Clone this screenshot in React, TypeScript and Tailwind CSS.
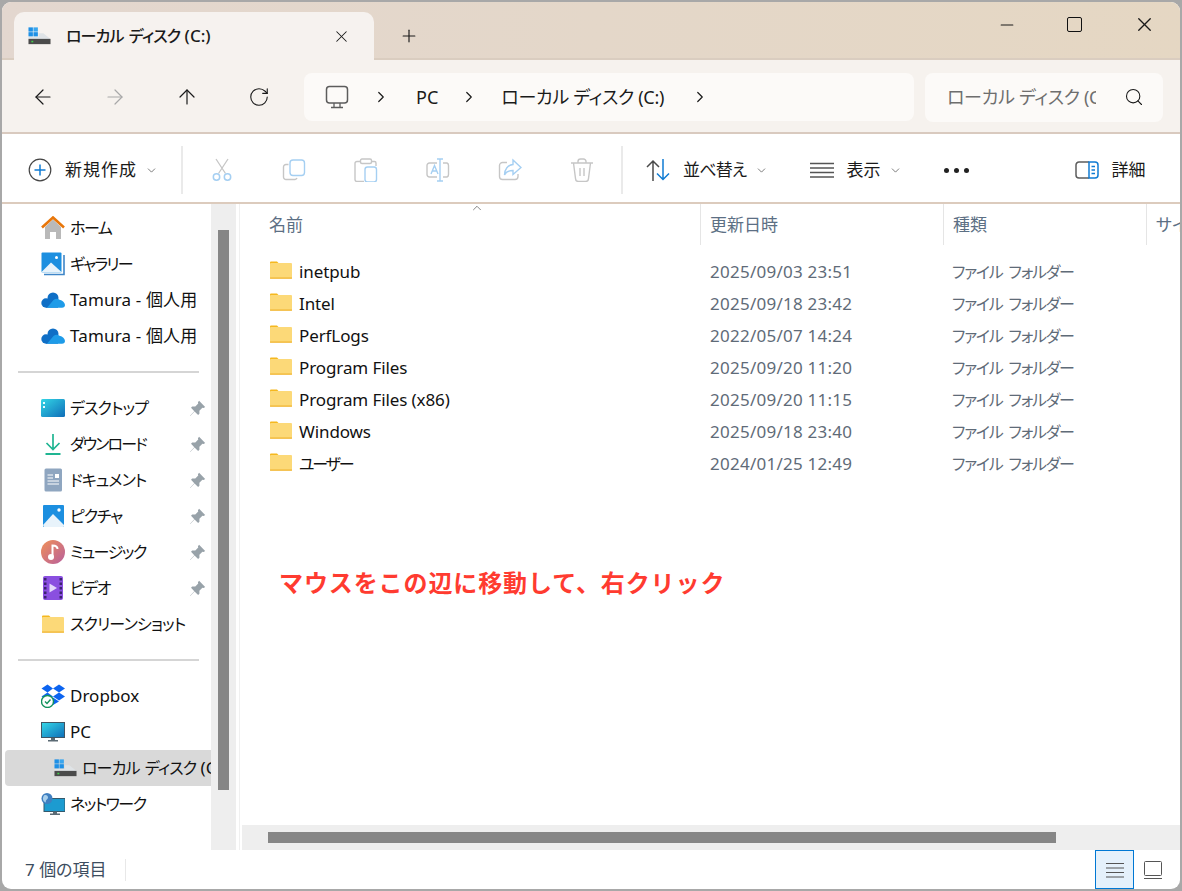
import { ChevronDown, ChevronRight, ChevronUp, X, Plus, Minus, RotateCw, ArrowLeft, ArrowRight, ArrowUp, Search } from "lucide-react";
import type { ReactNode } from "react";

const files = [
	{ name: "inetpub", date: "2025/09/03 23:51" },
	{ name: "Intel", date: "2025/09/18 23:42" },
	{ name: "PerfLogs", date: "2022/05/07 14:24" },
	{ name: "Program Files", date: "2025/09/20 11:20" },
	{ name: "Program Files (x86)", date: "2025/09/20 11:15" },
	{ name: "Windows", date: "2025/09/18 23:40" },
	{ name: "ユーザー", date: "2024/01/25 12:49", narrow: true },
];

const FolderIcon = ({ className = "w-[24px] h-[24px]" }: { className?: string }) => (
	<svg viewBox="0 0 24 24" className={className}>
		<path d="M1 4.500a1 1 0 0 1 1-1h6l2.500 2.500H1z" fill="#f5b81f" />
		<rect x="1" y="5" width="22" height="15.500" rx="1" fill="#fcd978" />
		<rect x="1" y="19.500" width="22" height="1.200" fill="#efb32c" />
	</svg>
);

const DriveIcon = () => (
	<svg viewBox="0 0 24 18" className="w-[23px] h-[18px] shrink-0">
		<rect x="0.500" y="0" width="4.600" height="4.400" fill="#1e90e6" />
		<rect x="5.700" y="0" width="4.600" height="4.400" fill="#3aa6ee" />
		<rect x="0.500" y="5" width="4.600" height="4.400" fill="#1e90e6" />
		<rect x="5.700" y="5" width="4.600" height="4.400" fill="#1e90e6" />
		<path d="M11 6h5l7.500 6H0.500V10H11z" fill="#dfe3e6" />
		<rect x="0.500" y="12" width="23" height="5.500" fill="#4b4b4b" />
		<rect x="3.500" y="14" width="2" height="1.600" fill="#3fd14a" />
	</svg>
);

const PinIcon = () => (
	<svg viewBox="0 0 16 16" className="w-[17px] h-[17px] shrink-0">
		<path d="M9.500 0.800 15.200 6.500 13.800 7.600 12.600 7.300 9.800 10.100 9.800 13 8.600 14.100 5.200 10.800 1.200 15 1 14.800 5 10.600 1.900 7.400 3 6.200 5.900 6.200 8.700 3.400 8.400 2.200z" fill="#98a2a9" />
	</svg>
);

const HomeIcon = () => (
	<svg viewBox="0 0 24 24" className="w-[24px] h-[24px]">
		<path d="M4 11 12 3.500 20 11V23H15V16H9V23H4z" fill="#b9b9b9" />
		<path d="M1 11.500 12 1.500 23 11.500" fill="none" stroke="#e8760a" strokeWidth="2.600" />
	</svg>
);

const GalleryIcon = () => (
	<svg viewBox="0 0 24 24" className="w-[24px] h-[24px]">
		<path d="M3 22.500H23V3" fill="none" stroke="#3f86c8" strokeWidth="1.600" />
		<rect x="0.500" y="0.500" width="20" height="20" rx="1" fill="#1c8fe0" />
		<path d="M0.500 20 10 10.500 20.500 20v0.500H0.500z" fill="#e8f3fb" />
		<circle cx="15.500" cy="5.500" r="1.500" fill="#fff" />
	</svg>
);

const CloudIcon = () => (
	<svg viewBox="0 0 24 16" className="w-[24px] h-[16px]">
		<g fill="#0f6fc6">
			<circle cx="12" cy="6" r="5.500" />
			<circle cx="5" cy="11" r="4.700" />
			<rect x="5" y="8" width="12" height="7.700" />
		</g>
		<path d="M6 15.700 12.500 8Q15.500 5.800 18.500 7.800Q23.500 9 24 13Q23.800 15.700 21 15.700z" fill="#1e9be8" />
	</svg>
);

const DesktopIcon = () => (
	<svg viewBox="0 0 24 18" className="w-[24px] h-[18px]">
		<defs>
			<linearGradient id="desk" x1="0" y1="0" x2="1" y2="1">
				<stop offset="0" stopColor="#33d6e6" />
				<stop offset="1" stopColor="#0f6db8" />
			</linearGradient>
		</defs>
		<rect width="24" height="18" rx="1.500" fill="url(#desk)" />
		<rect x="2" y="3" width="2" height="2" fill="#e8fbff" />
		<rect x="2" y="7" width="2" height="2" fill="#e8fbff" />
	</svg>
);

const DownloadIcon = () => (
	<svg viewBox="0 0 24 24" className="w-[24px] h-[24px]" fill="none" stroke="#1fb592" strokeWidth="1.700">
		<path d="M12 2V17M5.500 11 12 17.500 18.500 11" />
		<path d="M4.500 22H19.500" strokeWidth="2" />
	</svg>
);

const DocIcon = () => (
	<svg viewBox="0 0 24 24" className="w-[24px] h-[24px]">
		<rect x="3.500" y="0.500" width="17.500" height="23" rx="1.500" fill="#8fa6c0" />
		<path d="M6.500 7H12M6.500 10H12M6.500 13H18M6.500 16H18" stroke="#fff" strokeWidth="1" />
		<rect x="14" y="6" width="4" height="4" fill="#fff" />
	</svg>
);

const PictureIcon = () => (
	<svg viewBox="0 0 24 24" className="w-[24px] h-[24px]">
		<rect x="2" y="1" width="21" height="22" rx="1" fill="#1c8fe0" />
		<path d="M2 21 12 10 23 21v1a1 1 0 0 1-1 1H3z" fill="#e8f3fb" />
		<circle cx="18" cy="6" r="1.700" fill="#fff" />
	</svg>
);

const MusicIcon = () => (
	<svg viewBox="0 0 24 24" className="w-[24px] h-[24px]">
		<defs>
			<linearGradient id="mus" x1="0" y1="0" x2="1" y2="1">
				<stop offset="0" stopColor="#f09058" />
				<stop offset="1" stopColor="#b85f9c" />
			</linearGradient>
		</defs>
		<circle cx="12" cy="12" r="12" fill="url(#mus)" />
		<circle cx="10" cy="17" r="3" fill="#fff" />
		<path d="M11.500 17V5.500c2.500 0 5 1 5 3.500" fill="none" stroke="#fff" strokeWidth="2" />
	</svg>
);

const VideoIcon = () => (
	<svg viewBox="0 0 24 24" className="w-[24px] h-[24px]">
		<rect x="2" y="0" width="20" height="24" rx="2" fill="#8a4fe0" />
		{[2, 6.500, 11, 15.500, 20].map((y) => (
			<g key={y}>
				<rect x="3" y={y} width="2.500" height="2.500" fill="#3c2470" />
				<rect x="18.500" y={y} width="2.500" height="2.500" fill="#3c2470" />
			</g>
		))}
		<path d="M8.500 7.500 16 12 8.500 16.500z" fill="#e4d8fb" />
	</svg>
);

const DropboxIcon = () => (
	<svg viewBox="0 0 24 24" className="w-[24px] h-[24px]">
		<path d="M6.500 0.500 0.500 4.500 6.500 8.500 12 4.500zM18 0.500 12 4.500 18 8.500 24 4.500zM0.500 12.500 6.500 8.500 12 12.500 6.500 16.500zM24 12.500 18 8.500 12 12.500 18 16.500zM6.500 17.500 12 13.500 18 17.500 12 21z" fill="#0c64f0" />
		<circle cx="6.500" cy="17.500" r="6" fill="#fff" stroke="#12925c" strokeWidth="1.400" />
		<path d="M4 17.500 6 19.500 9.500 15.500" fill="none" stroke="#12925c" strokeWidth="1.400" />
	</svg>
);

const PcIcon = () => (
	<svg viewBox="0 0 24 20" className="w-[24px] h-[20px]">
		<defs>
			<linearGradient id="pcs" x1="0" y1="0" x2="1" y2="1">
				<stop offset="0" stopColor="#35d8e8" />
				<stop offset="1" stopColor="#0f6db8" />
			</linearGradient>
		</defs>
		<rect x="0.500" y="0.500" width="23" height="15" fill="url(#pcs)" stroke="#3f5564" strokeWidth="1" />
		<path d="M10 16h4v2h3v1.500H7V18h3z" fill="#5b6a74" />
	</svg>
);

const NetworkIcon = () => (
	<svg viewBox="0 0 24 24" className="w-[25px] h-[25px]">
		<rect x="3" y="6" width="21" height="13" fill="#1c9bd0" stroke="#35596b" strokeWidth="1" />
		<path d="M12 19h4v2h3v1.500H9V21h3z" fill="#5b6a74" />
		<circle cx="6" cy="6" r="5.500" fill="#3f7fc0" />
		<path d="M3 3c2-1 4 0 4 2S4 7 5 10c-3-1-4-4-2-7z" fill="#a9d0ec" />
	</svg>
);

const CutIcon = () => (
	<svg viewBox="0 0 24 24" className="w-[24px] h-[24px]" fill="none" strokeWidth="1.300">
		<path d="M6 1 15.500 15.500M18 1 8.500 15.500" stroke="#c6c6c6" />
		<circle cx="6.500" cy="19" r="3.200" stroke="#a5cff2" strokeWidth="1.500" />
		<circle cx="17.500" cy="19" r="3.200" stroke="#a5cff2" strokeWidth="1.500" />
	</svg>
);

const CopyIcon = () => (
	<svg viewBox="0 0 24 24" className="w-[24px] h-[24px]" fill="none" strokeWidth="1.400">
		<path d="M6.500 6.500H4a2.500 2.500 0 0 0-2.500 2.500v10A2.500 2.500 0 0 0 4 21.500h9a2.500 2.500 0 0 0 2-1.500" stroke="#c6c6c6" />
		<rect x="8" y="2" width="14.500" height="15.500" rx="3" stroke="#a5cff2" />
	</svg>
);

const PasteIcon = () => (
	<svg viewBox="0 0 24 24" className="w-[24px] h-[24px]" fill="none" strokeWidth="1.400">
		<path d="M6 3.500H3a2 2 0 0 0-2 2v16a2 2 0 0 0 2 2h7M18 3.500h2.500a1.500 1.500 0 0 1 1.500 1.500v3" stroke="#c6c6c6" />
		<rect x="6.500" y="1" width="11" height="4.500" rx="1.500" stroke="#c6c6c6" />
		<rect x="11" y="9" width="11.500" height="15" rx="2.500" stroke="#a5cff2" />
	</svg>
);

const RenameIcon = () => (
	<svg viewBox="0 0 24 24" className="w-[24px] h-[24px]" fill="none" strokeWidth="1.400">
		<path d="M11 5H3.500A2.500 2.500 0 0 0 1 7.500v9A2.500 2.500 0 0 0 3.500 19H11M17 5h4a2.500 2.500 0 0 1 1.500 2.500v9A2.500 2.500 0 0 1 21 19h-4" stroke="#c6c6c6" />
		<path d="M11 1h6M14 1V23M11 23h6M5 16 8.500 7.500 12 16M6.200 13H11" stroke="#a5cff2" />
	</svg>
);

const ShareIcon = () => (
	<svg viewBox="0 0 24 24" className="w-[24px] h-[24px]" fill="none" strokeWidth="1.400">
		<path d="M9 4.500H4.500A3 3 0 0 0 1.500 7.500v11A3 3 0 0 0 4.500 21.500H17a3 3 0 0 0 3-3V16" stroke="#c6c6c6" />
		<path d="M15 2 23 9.500 15 16.500V12.500C10.500 12.500 8 14 6.500 17 6.500 11 10 7 15 6.500z" stroke="#a5cff2" />
	</svg>
);

const TrashIcon = () => (
	<svg viewBox="0 0 24 24" className="w-[24px] h-[24px]" fill="none" stroke="#c6c6c6" strokeWidth="1.400">
		<path d="M1 5H23M8 5V3.500A2.500 2.500 0 0 1 10.500 1h3A2.500 2.500 0 0 1 16 3.500V5M3.500 5 5.500 20.500A3 3 0 0 0 8.500 23.500h7a3 3 0 0 0 3-3L20.500 5M10 10V18M14 10V18" />
	</svg>
);

const SortIcon = () => (
	<svg viewBox="0 0 24 24" className="w-[24px] h-[24px]" fill="none" strokeWidth="1.500">
		<path d="M7 23V3M1 9 7 3 13 9" stroke="#4a4a4a" />
		<path d="M17 1V21M11 15.500 17 21.500 23 15.500" stroke="#0f7bd3" />
	</svg>
);

const MonitorIcon = () => (
	<svg viewBox="0 0 24 24" className="w-[24px] h-[24px]" fill="none" stroke="#5c5c5c" strokeWidth="1.500">
		<rect x="1.500" y="1.500" width="21" height="16.500" rx="3" />
		<path d="M9 18V22M15 18V22M6 22.500H18" strokeWidth="1.300" />
	</svg>
);

const DetailsIcon = () => (
	<svg viewBox="0 0 24 18" className="w-[24px] h-[18px]" fill="none" strokeWidth="1.500">
		<path d="M14 1H4A3 3 0 0 0 1 4V14A3 3 0 0 0 4 17H14" stroke="#5c5c5c" />
		<path d="M14 1H20A3 3 0 0 1 23 4V14A3 3 0 0 1 20 17H14z" stroke="#0f7bd3" />
		<path d="M16.500 5.500H20M16.500 9H20M16.500 12.500H20" stroke="#0f7bd3" />
	</svg>
);

const Lines = () => (
	<svg viewBox="0 0 24 16" className="w-[24px] h-[16px]" stroke="#555" strokeWidth="1.300">
		<path d="M0 1.500H24M0 6H24M0 10.500H24M0 15H24" />
	</svg>
);

const NavRow = ({ icon, label, pinned, track = "" }: { icon: ReactNode; label: string; pinned?: boolean; track?: string }) => (
	<div className="h-[36px] flex items-center pl-[39px] pr-[5px]">
		<span className="w-[24px] flex justify-center shrink-0">{icon}</span>
		<span className={"ml-[5px] flex-1 whitespace-nowrap text-[#111] " + track}>{label}</span>
		{pinned && <PinIcon />}
	</div>
);

const Divider = () => (
	<div className="h-[36px] flex items-center pl-[16px] pr-[12px]">
		<div className="h-[2px] w-full bg-[#d5d5d5]" />
	</div>
);

const Tool = ({ icon, className }: { icon: ReactNode; className: string }) => (
	<span className={"flex items-center " + className}>{icon}</span>
);

const Sep = ({ className }: { className: string }) => <div className={"w-[2px] h-[48px] bg-[#eaeaea] " + className} />;

export default function App() {
	return (
		<div className="w-[1182px] h-[891px] bg-[#a8a8a8] p-[2px] text-[17px] text-[#1a1a1a] font-['Noto_Sans','Noto_Sans_CJK_JP',sans-serif] [font-feature-settings:'palt']">
			<div className="relative h-full rounded-[9px] overflow-hidden bg-white flex flex-col">
				{/* title bar */}
				<div className="h-[58px] shrink-0 flex items-end pl-[12px] bg-gradient-to-r from-[#e3d7cf] to-[#e5d7c3] border-b-[2px] border-[#dacdc0]">
					<div className="w-[360px] h-[48px] -mb-[2px] rounded-t-[10px] bg-[#f6f2ef] flex items-center pl-[14px]">
						<DriveIcon />
						<span className="ml-[15px] whitespace-nowrap font-medium">
							<span className="text-[16px] tracking-[-0.9px] [word-spacing:2px]">ローカル ディスク</span> (C:)
						</span>
						<X className="ml-auto mr-[23px] w-[19px] h-[19px]" strokeWidth={1.3} />
					</div>
					<Plus className="ml-[25px] mb-[12px] w-[20px] h-[20px]" strokeWidth={1.4} />
					<div className="ml-auto self-start flex items-center mt-[11px] mr-[24px]">
						<Minus className="w-[20px] h-[20px]" strokeWidth={1.3} />
						<div className="ml-[50px] w-[15px] h-[15px] border-[1.500px] border-[#111] rounded-[2px]" />
						<X className="ml-[51px] w-[23px] h-[23px]" strokeWidth={1.4} />
					</div>
				</div>
				{/* address row */}
				<div className="h-[74px] shrink-0 bg-[#f6f2ee] flex items-center pl-[29px] pt-[2px] border-b-[2px] border-[#d9cabf]">
					<ArrowLeft className="w-[24px] h-[24px]" strokeWidth={1.2} />
					<ArrowRight className="ml-[48px] w-[24px] h-[24px] text-[#a8a8a8]" strokeWidth={1.2} />
					<ArrowUp className="ml-[48px] w-[24px] h-[24px]" strokeWidth={1.2} />
					<RotateCw className="ml-[49px] w-[22px] h-[22px]" strokeWidth={1.2} />
					<div className="ml-[34px] w-[610px] h-[48px] rounded-[8px] bg-[#fcfaf8] flex items-center pl-[21px] text-[18px]">
						<MonitorIcon />
						<ChevronRight className="ml-[23px] w-[18px] h-[18px]" strokeWidth={1.6} />
						<span className="ml-[26px]">PC</span>
						<ChevronRight className="ml-[22px] w-[18px] h-[18px]" strokeWidth={1.6} />
						<span className="ml-[23px] whitespace-nowrap tracking-[-0.3px]">ローカル ディスク (C:)</span>
						<ChevronRight className="ml-[27px] w-[18px] h-[18px]" strokeWidth={1.6} />
					</div>
					<div className="ml-[11px] w-[238px] h-[49px] rounded-[8px] bg-[#fcfaf8] flex items-center pl-[22px] text-[18px]">
						<span className="w-[149px] overflow-hidden whitespace-nowrap text-[#6e6e6e] tracking-[-0.3px]">ローカル ディスク (C:)</span>
						<Search className="ml-[28px] w-[20px] h-[20px]" strokeWidth={1.3} />
					</div>
				</div>
				{/* toolbar */}
				<div className="h-[70px] shrink-0 flex items-center pl-[26px] pt-[4px] border-b-[2px] border-[#dccbbd]">
					<svg viewBox="0 0 24 24" className="w-[24px] h-[24px]" fill="none">
						<circle cx="12" cy="12" r="10.800" stroke="#444" strokeWidth="1.200" />
						<path d="M12 6.500V17.500M6.500 12H17.500" stroke="#0f7bd3" strokeWidth="1.500" />
					</svg>
					<span className="ml-[13px] whitespace-nowrap tracking-[1px]">新規作成</span>
					<ChevronDown className="ml-[8px] w-[13px] h-[13px] text-[#555]" strokeWidth={1.4} />
					<Sep className="ml-[23px]" />
					<Tool icon={<CutIcon />} className="ml-[27px]" />
					<Tool icon={<CopyIcon />} className="ml-[48px]" />
					<Tool icon={<PasteIcon />} className="ml-[48px]" />
					<Tool icon={<RenameIcon />} className="ml-[48px]" />
					<Tool icon={<ShareIcon />} className="ml-[48px]" />
					<Tool icon={<TrashIcon />} className="ml-[48px]" />
					<Sep className="ml-[27px]" />
					<Tool icon={<SortIcon />} className="ml-[23px]" />
					<span className="ml-[13px] whitespace-nowrap tracking-[-0.8px]">並べ替え</span>
					<ChevronDown className="ml-[8px] w-[13px] h-[13px] text-[#555]" strokeWidth={1.4} />
					<Tool icon={<Lines />} className="ml-[42px]" />
					<span className="ml-[13px] whitespace-nowrap">表示</span>
					<ChevronDown className="ml-[8px] w-[13px] h-[13px] text-[#555]" strokeWidth={1.4} />
					<div className="ml-[42px] flex gap-[5px]">
						<span className="w-[5px] h-[5px] rounded-full bg-[#222]" />
						<span className="w-[5px] h-[5px] rounded-full bg-[#222]" />
						<span className="w-[5px] h-[5px] rounded-full bg-[#222]" />
					</div>
					<Tool icon={<DetailsIcon />} className="ml-[106px]" />
					<span className="ml-[13px] whitespace-nowrap">詳細</span>
				</div>
				{/* body */}
				<div className="flex-1 min-h-0 flex">
					<div className="w-[209px] shrink-0 pt-[6px] overflow-hidden">
						<NavRow icon={<HomeIcon />} label="ホーム" track="text-[16px] tracking-[-1.500px]" />
						<NavRow icon={<GalleryIcon />} label="ギャラリー" track="text-[16px] tracking-[-1.800px]" />
						<NavRow icon={<CloudIcon />} label="Tamura - 個人用" track="tracking-[0.15px]" />
						<NavRow icon={<CloudIcon />} label="Tamura - 個人用" track="tracking-[0.15px]" />
						<Divider />
						<NavRow icon={<DesktopIcon />} label="デスクトップ" pinned track="text-[16px] tracking-[-0.900px]" />
						<NavRow icon={<DownloadIcon />} label="ダウンロード" pinned track="text-[16px] tracking-[-1.900px]" />
						<NavRow icon={<DocIcon />} label="ドキュメント" pinned track="text-[16px] tracking-[-0.900px]" />
						<NavRow icon={<PictureIcon />} label="ピクチャ" pinned track="text-[16px] tracking-[-1.200px]" />
						<NavRow icon={<MusicIcon />} label="ミュージック" pinned track="text-[16px] tracking-[-1.500px]" />
						<NavRow icon={<VideoIcon />} label="ビデオ" pinned track="text-[16px] tracking-[-1.500px]" />
						<NavRow icon={<FolderIcon />} label="スクリーンショット" track="text-[16px] tracking-[-0.800px]" />
						<Divider />
						<NavRow icon={<DropboxIcon />} label="Dropbox" />
						<NavRow icon={<PcIcon />} label="PC" />
						<div className="ml-[3px] h-[36px] rounded-l-[4px] bg-[#d9d9d9] flex items-center pl-[49px] overflow-hidden">
							<DriveIcon />
							<span className="ml-[5px] whitespace-nowrap text-[#111]">
								<span className="text-[16px] tracking-[-0.9px] [word-spacing:2px]">ローカル ディスク</span> (C:)
							</span>
						</div>
						<NavRow icon={<NetworkIcon />} label="ネットワーク" track="text-[16px] tracking-[-1.500px]" />
					</div>
					<div className="w-[25px] shrink-0 bg-[#eeeeee] pl-[7px] pt-[26px]">
						<div className="w-[11px] h-[560px] bg-[#868686]" />
					</div>
					<div className="flex-1 min-w-0 flex flex-col ml-[3px] border-l border-[#f0f0f0]">
						<div className="flex-1 min-h-0 relative overflow-hidden">
							<ChevronUp className="absolute left-[230px] -top-[3px] w-[14px] h-[14px] text-[#555]" strokeWidth={1.2} />
							<div className="h-[41px] flex text-[#5c6f84]">
								<div className="w-[460px] pl-[29px] flex items-center">名前</div>
								<div className="w-[243px] pl-[9px] flex items-center border-l border-[#e5e5e5]">更新日時</div>
								<div className="w-[203px] pl-[9px] flex items-center border-l border-[#e5e5e5]">種類</div>
								<div className="flex-1 pl-[9px] flex items-center border-l border-[#e5e5e5] whitespace-nowrap overflow-hidden">サイズ</div>
							</div>
							<div className="pt-[11px]">
								{files.map((f) => (
									<div className="h-[32px] flex items-center" key={f.name}>
										<div className="w-[460px] pl-[29px] flex items-center text-[#111]">
											<FolderIcon className="w-[24px] h-[24px] -mt-[4px] shrink-0" />
											<span className={"ml-[6px] whitespace-nowrap " + (f.narrow ? "text-[16px] tracking-[-2.200px]" : "tracking-[-0.1px]")}>{f.name}</span>
										</div>
										<div className="w-[243px] pl-[10px] text-[#5f6b78] whitespace-nowrap tracking-[0.25px]">{f.date}</div>
										<div className="pl-[9px] text-[16px] text-[#5f6b78] whitespace-nowrap tracking-[-1.200px] [word-spacing:3px]">ファイル フォルダー</div>
									</div>
								))}
							</div>
							<div className="absolute left-[39px] top-[361px] text-[24px] font-bold text-[#ff3b30] whitespace-nowrap [font-feature-settings:normal] tracking-[0.9px]">
								マウスをこの辺に移動して、右クリック
							</div>
						</div>
						<div className="h-[25px] shrink-0 ml-[2px] bg-[#eeeeee] pl-[26px] pt-[7px]">
							<div className="w-[788px] h-[11px] bg-[#868686]" />
						</div>
					</div>
				</div>
				{/* status bar */}
				<div className="h-[39px] shrink-0 flex items-center pl-[23px] text-[#3d4d60]">
					<span className="whitespace-nowrap">7 個の項目</span>
					<div className="ml-[18px] h-[22px] w-[1px] bg-[#e8e8e8]" />
					<div className="ml-auto h-full w-[39px] bg-[#e5f1fb] border border-[#0078d4] flex items-center justify-center">
						<svg viewBox="0 0 18 16" className="w-[18px] h-[16px]" stroke="#555" strokeWidth="1">
							<path d="M0 1.500H18M0 6H18M0 10.500H18M0 15H18" />
						</svg>
					</div>
					<svg viewBox="0 0 18 18" className="ml-[10px] mr-[18px] w-[18px] h-[18px]" fill="none" stroke="#555" strokeWidth="1">
						<rect x="0.500" y="0.500" width="17" height="14" rx="1" />
						<path d="M0 17.500H18" />
					</svg>
				</div>
			</div>
		</div>
	);
}
